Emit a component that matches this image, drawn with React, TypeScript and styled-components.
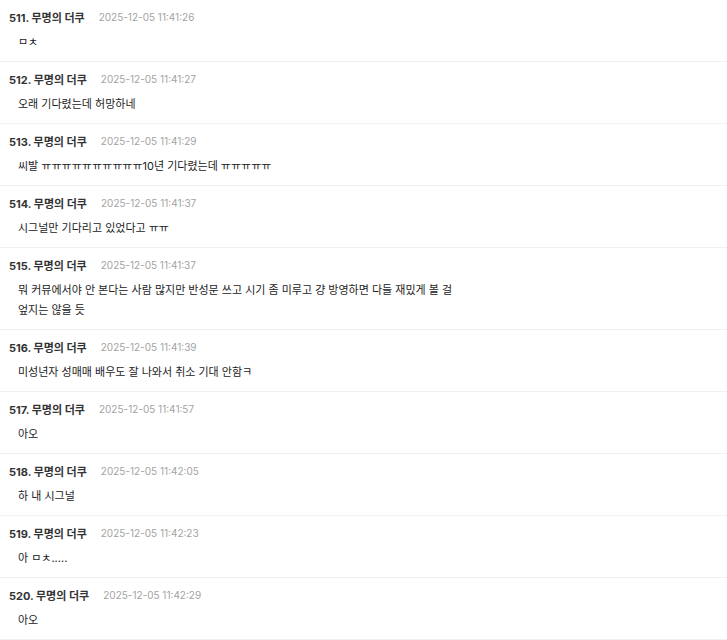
import React from 'react';
import styled, { createGlobalStyle } from 'styled-components';

const GlobalStyle = createGlobalStyle`
    html, body {
        margin: 0;
        padding: 0;
        background: #ffffff;
    }
    body {
        font-family: "Inter", "Noto Sans CJK KR", sans-serif;
        -webkit-font-smoothing: antialiased;
    }
`;

const CommentList = styled.ul`
    list-style: none;
    margin: 0;
    padding: 0;
`;

const CommentItem = styled.li`
    padding: 8px 9px 9px;
    border-bottom: 1px solid #f0f0f0;
`;

const CommentHeader = styled.div`
    display: flex;
    align-items: center;
    gap: 14px;
    height: 18px;
`;

const Author = styled.span`
    font-size: 11px;
    font-weight: 700;
    color: #333333;
`;

const Timestamp = styled.span`
    font-size: 10px;
    color: #a3a3a3;
`;

const Body = styled.div`
    margin-top: 6px;
    padding-left: 9px;
    font-size: 11px;
    line-height: 20px;
    color: #222222;
    max-width: 445px;
    word-break: keep-all;
`;

interface Comment {
    no: number;
    time: string;
    text: string;
}

const comments: Comment[] = [
    { no: 511, time: '2025-12-05 11:41:26', text: 'ㅁㅊ' },
    { no: 512, time: '2025-12-05 11:41:27', text: '오래 기다렸는데 허망하네' },
    { no: 513, time: '2025-12-05 11:41:29', text: '씨발 ㅠㅠㅠㅠㅠㅠㅠㅠㅠㅠ10년 기다렸는데 ㅠㅠㅠㅠㅠ' },
    { no: 514, time: '2025-12-05 11:41:37', text: '시그널만 기다리고 있었다고 ㅠㅠ' },
    {
        no: 515,
        time: '2025-12-05 11:41:37',
        text: '뭐 커뮤에서야 안 본다는 사람 많지만 반성문 쓰고 시기 좀 미루고 걍 방영하면 다들 재밌게 볼 걸 엎지는 않을 듯',
    },
    { no: 516, time: '2025-12-05 11:41:39', text: '미성년자 성매매 배우도 잘 나와서 취소 기대 안함ㅋ' },
    { no: 517, time: '2025-12-05 11:41:57', text: '아오' },
    { no: 518, time: '2025-12-05 11:42:05', text: '하 내 시그널' },
    { no: 519, time: '2025-12-05 11:42:23', text: '아 ㅁㅊ.....' },
    { no: 520, time: '2025-12-05 11:42:29', text: '아오' },
];

const App: React.FC = () => {
    return (
        <>
            <GlobalStyle />
            <CommentList>
                {comments.map(comment => (
                    <CommentItem key={comment.no}>
                        <CommentHeader>
                            <Author>{comment.no}. 무명의 더쿠</Author>
                            <Timestamp>{comment.time}</Timestamp>
                        </CommentHeader>
                        <Body>{comment.text}</Body>
                    </CommentItem>
                ))}
            </CommentList>
        </>
    );
};

export default App;
